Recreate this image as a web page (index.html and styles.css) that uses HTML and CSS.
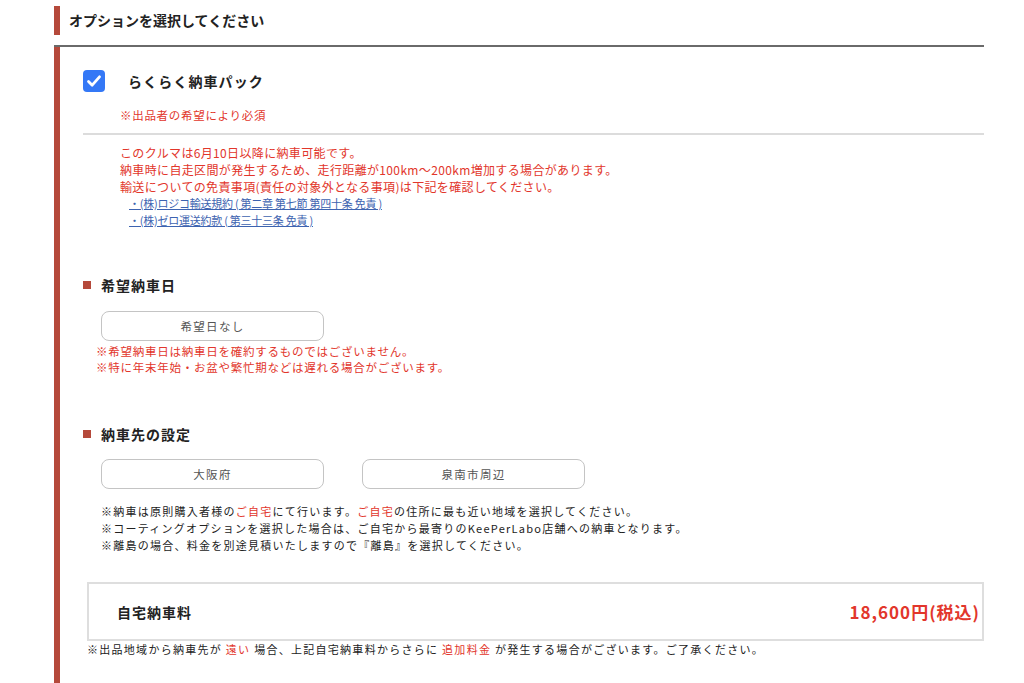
FILE: index.html
```html
<!DOCTYPE html>
<html lang="ja">
<head>
<meta charset="utf-8">
<title>オプションを選択してください</title>
<link rel="stylesheet" href="styles.css">
</head>
<body>
<div class="page">
  <div class="title">オプションを選択してください</div>
  <div class="rule"></div>
  <div class="panel">
    <div class="option">
      <span class="checkbox">
        <svg width="22" height="22" viewBox="0 0 22 22"><path d="M5.5 11.5 L9.2 15.2 L16.5 6.8" fill="none" stroke="#fff" stroke-width="2.8" stroke-linecap="round" stroke-linejoin="round"/></svg>
      </span>
      <span class="option-label">らくらく納車パック</span>
    </div>
    <p class="required">※出品者の希望により必須</p>
    <div class="divider"></div>
    <div class="notice">
      <p>このクルマは6月10日以降に納車可能です。</p>
      <p>納車時に自走区間が発生するため、走行距離が100km〜200km増加する場合があります。</p>
      <p>輸送についての免責事項(責任の対象外となる事項)は下記を確認してください。</p>
    </div>
    <div class="links">
      <a href="#">・(株)ロジコ輸送規約&nbsp;(&nbsp;第二章 第七節 第四十条 免責&nbsp;)</a>
      <a href="#">・(株)ゼロ運送約款&nbsp;(&nbsp;第三十三条 免責&nbsp;)</a>
    </div>

    <h3 class="heading heading-date"><span class="square"></span>希望納車日</h3>
    <div class="select-row">
      <div class="select">希望日なし</div>
    </div>
    <div class="date-notes">
      <p>※希望納車日は納車日を確約するものではございません。</p>
      <p>※特に年末年始・お盆や繁忙期などは遅れる場合がございます。</p>
    </div>

    <h3 class="heading heading-dest"><span class="square"></span>納車先の設定</h3>
    <div class="select-row">
      <div class="select">大阪府</div>
      <div class="select">泉南市周辺</div>
    </div>
    <div class="dest-notes">
      <p>※納車は原則購入者様の<span class="red">ご自宅</span>にて行います。<span class="red">ご自宅</span>の住所に最も近い地域を選択してください。</p>
      <p>※コーティングオプションを選択した場合は、ご自宅から最寄りのKeePerLabo店舗への納車となります。</p>
      <p>※離島の場合、料金を別途見積いたしますので『離島』を選択してください。</p>
    </div>

    <div class="fee">
      <span class="fee-label">自宅納車料</span>
      <span class="fee-price">18,600円(税込)</span>
    </div>
    <p class="fee-note">※出品地域から納車先が <span class="red">遠い</span> 場合、上記自宅納車料からさらに <span class="red">追加料金</span> が発生する場合がございます。ご了承ください。</p>
  </div>
</div>
</body>
</html>
```

FILE: styles.css
```css
* { box-sizing: border-box; }
html, body { margin: 0; padding: 0; background: #fff; }
body {
  font-family: "Noto Sans CJK JP", "Noto Sans", sans-serif;
  color: #222;
  overflow: hidden;
}
p { margin: 0; }

.page {
  margin-left: 54px;
  width: 930px;
  padding-top: 6px;
}

.title {
  border-left: 6px solid #b5493b;
  height: 29px;
  line-height: 29px;
  padding-left: 9px;
  font-size: 14px;
  font-weight: 700;
  color: #222;
}

.rule {
  margin-top: 10px;
  height: 2px;
  background: #6a6a6a;
}

.panel {
  border-left: 6px solid #b5493b;
  padding: 23px 0 60px 23px;
}

.option {
  display: flex;
  align-items: center;
  height: 22px;
}
.checkbox {
  width: 22px;
  height: 22px;
  border-radius: 4px;
  background: #3478f6;
  display: block;
}
.checkbox svg { display: block; }
.option-label {
  margin-left: 23px;
  font-size: 14px;
  font-weight: 700;
  letter-spacing: 1.1px;
  line-height: 20px;
  color: #222;
}

.red { color: #e2362b; }

.required {
  margin: 15px 0 0 37px;
  font-size: 11.5px;
  line-height: 17px;
  letter-spacing: 0.7px;
  color: #e2362b;
}

.divider {
  margin-top: 9px;
  height: 2px;
  background: #dcdcdc;
}

.notice {
  margin: 9px 0 0 37px;
  font-size: 12px;
  line-height: 17px;
  letter-spacing: 0.35px;
  color: #e2362b;
}

.links {
  margin-left: 46px;
  display: flex;
  flex-direction: column;
  align-items: flex-start;
}
.links a {
  font-size: 11px;
  line-height: 17px;
  color: #3d63b0;
  text-decoration: underline;
  letter-spacing: -0.25px;
}

.heading {
  margin: 0;
  display: flex;
  align-items: center;
  height: 20px;
  font-size: 14px;
  font-weight: 700;
  letter-spacing: 1px;
  color: #222;
}
.heading-date { margin-top: 46px; }
.heading-dest { margin-top: 49px; }
.square {
  width: 8px;
  height: 8px;
  background: #b5493b;
  margin-right: 10px;
  margin-top: -1px;
}

.select-row {
  display: flex;
  gap: 38px;
  margin: 16px 0 0 18px;
}
.heading-dest + .select-row { margin-top: 15px; }
.select {
  width: 223px;
  height: 30px;
  border: 1px solid #c4c4c4;
  border-radius: 8px;
  display: flex;
  align-items: center;
  justify-content: center;
  font-size: 11.5px;
  letter-spacing: 1.3px;
  color: #555;
}

.date-notes {
  margin: 2px 0 0 13px;
  font-size: 11.5px;
  line-height: 16px;
  letter-spacing: 0.75px;
  color: #e2362b;
}

.dest-notes {
  margin: 14px 0 0 18px;
  font-size: 11px;
  line-height: 17px;
  letter-spacing: 1.25px;
  color: #222;
}

.fee {
  margin: 28px 0 0 4px;
  height: 59px;
  border: 2px solid #dedede;
  display: flex;
  align-items: center;
  justify-content: space-between;
  padding: 0 2px 0 28px;
}
.fee-label {
  font-size: 14px;
  font-weight: 700;
  letter-spacing: 1px;
  color: #222;
}
.fee-price {
  font-size: 17px;
  font-weight: 700;
  letter-spacing: 1px;
  color: #e2362b;
}

.fee-note {
  margin-left: 4px;
  font-size: 11px;
  line-height: 16px;
  letter-spacing: 1.28px;
  color: #222;
}
```
